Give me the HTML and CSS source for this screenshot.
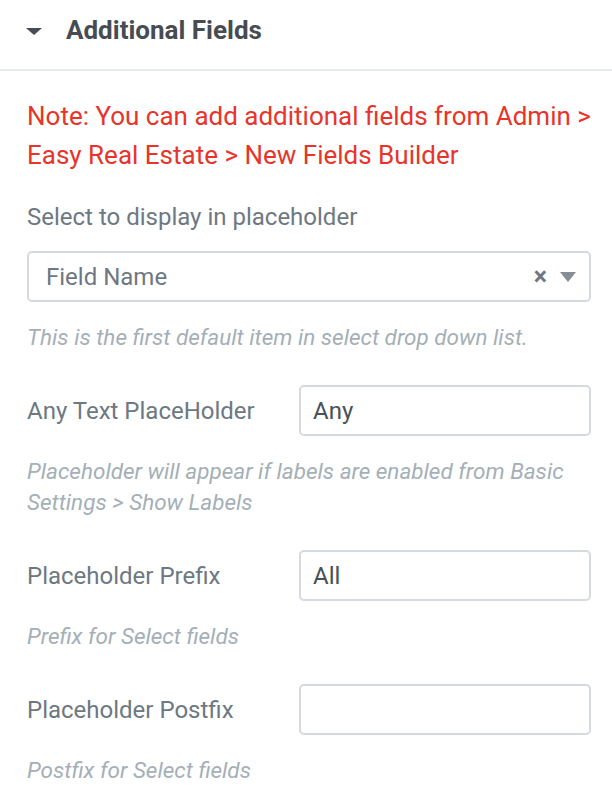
FILE: index.html
```html
<!DOCTYPE html>
<html>
<head>
<meta charset="utf-8">
<link rel="stylesheet" href="styles.css">
</head>
<body>
<div class="panel">
  <div class="section-head">
    <span class="caret"></span>
    <span class="section-title">Additional Fields</span>
  </div>
  <div class="section-body">
    <div class="note">Note: You can add additional fields from Admin &gt; Easy Real Estate &gt; New Fields Builder</div>

    <div class="control block">
      <div class="label">Select to display in placeholder</div>
      <div class="select">
        <span class="select-value">Field Name</span>
        <span class="select-icons">
          <span class="clear">×</span>
          <span class="arrow"></span>
        </span>
      </div>
      <div class="desc">This is the first default item in select drop down list.</div>
    </div>

    <div class="control">
      <div class="row">
        <div class="label">Any Text PlaceHolder</div>
        <div class="input">Any</div>
      </div>
      <div class="desc">Placeholder will appear if labels are enabled from Basic Settings &gt; Show Labels</div>
    </div>

    <div class="control">
      <div class="row">
        <div class="label">Placeholder Prefix</div>
        <div class="input">All</div>
      </div>
      <div class="desc">Prefix for Select fields</div>
    </div>

    <div class="control">
      <div class="row">
        <div class="label">Placeholder Postfix</div>
        <div class="input"></div>
      </div>
      <div class="desc">Postfix for Select fields</div>
    </div>
  </div>
</div>
</body>
</html>
```

FILE: styles.css
```css
html, body {
  margin: 0;
  padding: 0;
  background: #ffffff;
}
body {
  font-family: Roboto, "Liberation Sans", Arial, sans-serif;
  width: 612px;
  height: 810px;
  overflow: hidden;
}
.panel {
  width: 612px;
}
.section-head {
  height: 71px;
  border-bottom: 2px solid #e6e9ec;
  display: flex;
  align-items: center;
  padding-left: 26px;
  box-sizing: border-box;
}
.caret {
  width: 0;
  height: 0;
  border-left: 8px solid transparent;
  border-right: 8px solid transparent;
  border-top: 7px solid #474c52;
  margin-right: 24px;
  margin-top: -7px;
}
.section-title {
  font-size: 26px;
  line-height: 32px;
  font-weight: 700;
  color: #474c52;
  margin-top: -9px;
}
.section-body {
  padding: 26px 21px 0 27px;
}
.note {
  color: #e8342a;
  font-size: 26px;
  line-height: 39px;
}
.control.block {
  margin-top: 27px;
}
.label {
  color: #6d7882;
  font-size: 24px;
  line-height: 30px;
}
.select {
  margin-top: 19px;
  height: 51px;
  border: 2px solid #d5dadf;
  border-radius: 5px;
  box-sizing: border-box;
  display: flex;
  align-items: center;
  justify-content: space-between;
  padding: 0 13px 0 17px;
}
.select-value {
  color: #6d7882;
  font-size: 24px;
}
.select-icons {
  display: flex;
  align-items: center;
  gap: 13px;
}
.clear {
  color: #6d7882;
  font-size: 25px;
  font-weight: 700;
  line-height: 1;
}
.arrow {
  width: 0;
  height: 0;
  border-left: 8px solid transparent;
  border-right: 8px solid transparent;
  border-top: 10px solid #868e95;
}
.desc {
  color: #a4afb7;
  font-size: 22.5px;
  font-style: italic;
  line-height: 31px;
  margin-top: 20px;
}
.control {
  margin-top: 32px;
}
.row {
  display: flex;
  align-items: center;
}
.row .label {
  width: 272px;
  flex: none;
}
.input {
  flex: 1;
  height: 51px;
  border: 2px solid #d5dadf;
  border-radius: 5px;
  box-sizing: border-box;
  padding: 0 12px;
  display: flex;
  align-items: center;
  color: #495157;
  font-size: 24px;
}
```
